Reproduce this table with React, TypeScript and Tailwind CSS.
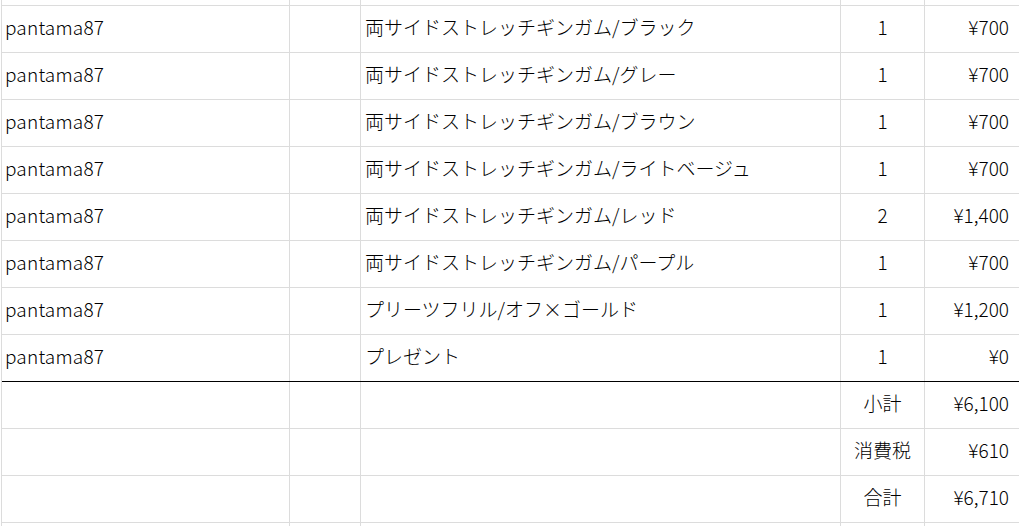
import React from "react";

const items: [string, string, string][] = [
  ["両サイドストレッチギンガム/ブラック", "1", "¥700"],
  ["両サイドストレッチギンガム/グレー", "1", "¥700"],
  ["両サイドストレッチギンガム/ブラウン", "1", "¥700"],
  ["両サイドストレッチギンガム/ライトベージュ", "1", "¥700"],
  ["両サイドストレッチギンガム/レッド", "2", "¥1,400"],
  ["両サイドストレッチギンガム/パープル", "1", "¥700"],
  ["プリーツフリル/オフ×ゴールド", "1", "¥1,200"],
  ["プレゼント", "1", "¥0"],
];

const totals: [string, string][] = [
  ["小計", "¥6,100"],
  ["消費税", "¥610"],
  ["合計", "¥6,710"],
];

function Row({
  a,
  c,
  d,
  e,
  h = "h-[47px]",
  bottom = "border-b border-[#dcdcdc]",
}: {
  a?: string;
  c?: string;
  d?: string;
  e?: string;
  h?: string;
  bottom?: string;
}) {
  return (
    <div className={`flex ${h} ${bottom}`}>
      <div className="w-[288px] shrink-0 border-r border-[#dcdcdc] flex items-center pl-[3px] pb-[6px] tracking-[0.2px]">{a}</div>
      <div className="w-[71px] shrink-0 border-r border-[#dcdcdc]" />
      <div className="w-[480px] shrink-0 border-r border-[#dcdcdc] flex items-center pl-[4px] pb-[6px] whitespace-nowrap">{c}</div>
      <div className="w-[84px] shrink-0 border-r border-[#dcdcdc] flex items-center justify-center pb-[6px]">{d}</div>
      <div className="flex-1 flex items-center justify-end pr-[10px] pb-[6px]">{e}</div>
    </div>
  );
}

export default function App() {
  return (
    <div
      className="w-[1019px] h-[526px] overflow-hidden bg-white text-black text-[19px] leading-none font-light"
      style={{ fontFamily: '"Noto Sans CJK JP", "Noto Sans", sans-serif' }}
    >
      <div className="ml-px border-l border-[#dcdcdc] h-full">
        <Row h="h-[6px]" />
        {items.map((it, i) => (
          <Row
            key={i}
            a="pantama87"
            c={it[0]}
            d={it[1]}
            e={it[2]}
            bottom={i === items.length - 1 ? "border-b border-black" : "border-b border-[#dcdcdc]"}
          />
        ))}
        {totals.map((t, i) => (
          <Row key={i} d={t[0]} e={t[1]} />
        ))}
        <Row h="h-[20px]" bottom="" />
      </div>
    </div>
  );
}
